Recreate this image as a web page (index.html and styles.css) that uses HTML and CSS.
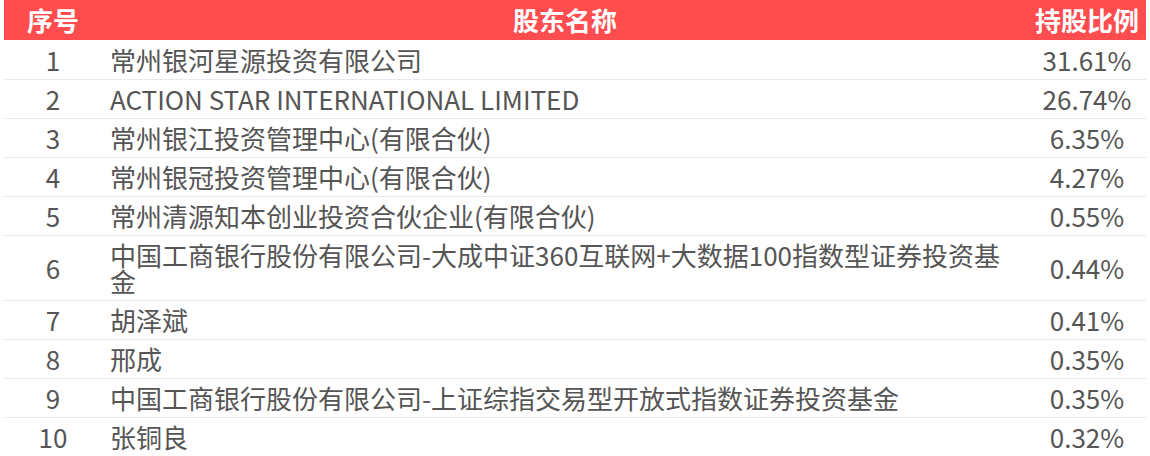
FILE: index.html
```html
<!DOCTYPE html>
<html lang="zh-CN">
<head>
<meta charset="utf-8">
<title>股东</title>
<link rel="stylesheet" href="styles.css">
</head>
<body>
<div class="wrap">
<table class="holders">
<colgroup><col class="c-no"><col class="c-name"><col class="c-pct"></colgroup>
<thead>
<tr><th>序号</th><th>股东名称</th><th>持股比例</th></tr>
</thead>
<tbody>
<tr><td class="no">1</td><td class="name">常州银河星源投资有限公司</td><td class="pct">31.61%</td></tr>
<tr><td class="no">2</td><td class="name">ACTION STAR INTERNATIONAL LIMITED</td><td class="pct">26.74%</td></tr>
<tr><td class="no">3</td><td class="name">常州银江投资管理中心(有限合伙)</td><td class="pct">6.35%</td></tr>
<tr><td class="no">4</td><td class="name">常州银冠投资管理中心(有限合伙)</td><td class="pct">4.27%</td></tr>
<tr><td class="no">5</td><td class="name">常州清源知本创业投资合伙企业(有限合伙)</td><td class="pct">0.55%</td></tr>
<tr><td class="no">6</td><td class="name">中国工商银行股份有限公司-大成中证360互联网+大数据100指数型证券投资基金</td><td class="pct">0.44%</td></tr>
<tr><td class="no">7</td><td class="name">胡泽斌</td><td class="pct">0.41%</td></tr>
<tr><td class="no">8</td><td class="name">邢成</td><td class="pct">0.35%</td></tr>
<tr><td class="no">9</td><td class="name">中国工商银行股份有限公司-上证综指交易型开放式指数证券投资基金</td><td class="pct">0.35%</td></tr>
<tr><td class="no">10</td><td class="name">张铜良</td><td class="pct">0.32%</td></tr>
</tbody>
</table>
</div>
</body>
</html>
```
FILE: styles.css
```css
html, body {
  margin: 0;
  padding: 0;
  background: #ffffff;
}
.wrap {
  padding: 0 4px;
}
.holders {
  width: 100%;
  border-collapse: collapse;
  table-layout: fixed;
  font-family: "Noto Sans CJK SC", "Noto Sans", sans-serif;
  font-size: 26px;
  line-height: 26px;
  color: #555555;
}
.c-no { width: 98px; }
.c-pct { width: 118px; }
.holders th {
  background: #ff4d4f;
  color: #ffffff;
  font-weight: bold;
  text-align: center;
  padding: 7px 0;
  height: 26px;
  border-bottom: 1px solid #ffffff;
}
.holders td {
  padding: 6px 0;
  border-bottom: 1px solid #e8e8ee;
  vertical-align: middle;
}
.holders td.no { text-align: center; }
.holders td.name { text-align: left; padding-left: 8px; padding-right: 8px; }
.holders td.pct { text-align: center; }
.holders tbody tr:last-child td { border-bottom: none; }
```
